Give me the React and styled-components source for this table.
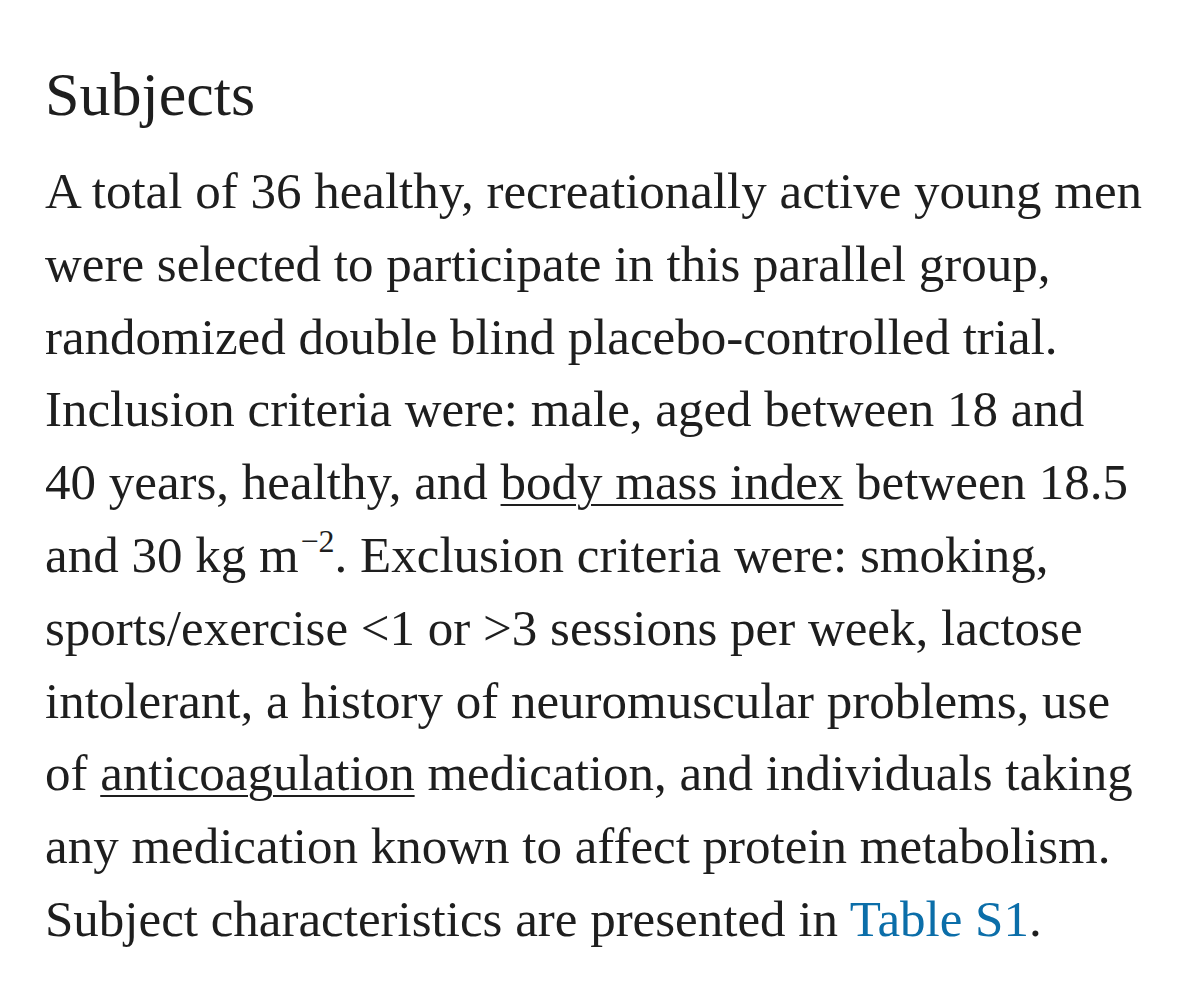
import React from "react";
import styled, { createGlobalStyle } from "styled-components";

const GlobalStyle = createGlobalStyle`
  html, body {
    margin: 0;
    padding: 0;
    background: #ffffff;
  }
`;

const Page = styled.div`
  width: 1200px;
  min-height: 993px;
  box-sizing: border-box;
  padding: 58px 40px 0px 45px;
  background: #ffffff;
  color: #1e1e1e;
  font-family: "Liberation Serif", "Times New Roman", serif;
`;

const Heading = styled.h2`
  margin: 0px;
  font-size: 62px;
  font-weight: normal;
  line-height: 72px;
`;

const Body = styled.p`
  margin: 25px 0px 0px 0px;
  font-size: 51px;
  line-height: 72.8px;
`;

const Line = styled.span`
  display: block;
  white-space: nowrap;
`;

const Term = styled.span`
  text-decoration: underline;
  text-decoration-thickness: 2px;
  text-underline-offset: 5px;
`;

const Sup = styled.sup`
  font-size: 32px;
  line-height: 0;
  vertical-align: 20px;
  margin-left: 2px;
`;

const Ref = styled.a`
  color: #0b6ea9;
  text-decoration: none;
`;

const lines = [
  "A total of 36 healthy, recreationally active young men",
  "were selected to participate in this parallel group,",
  "randomized double blind placebo-controlled trial.",
  "Inclusion criteria were: male, aged between 18 and",
];

export default function App() {
  return (
    <React.Fragment>
      <GlobalStyle />
      <Page>
        <Heading>Subjects</Heading>
        <Body>
          {lines.map((l) => (
            <Line key={l}>{l}</Line>
          ))}
          <Line>
            40 years, healthy, and <Term>body mass index</Term> between 18.5
          </Line>
          <Line>
            and 30 kg m<Sup>−2</Sup>. Exclusion criteria were: smoking,
          </Line>
          <Line>sports/exercise &lt;1 or &gt;3 sessions per week, lactose</Line>
          <Line>intolerant, a history of neuromuscular problems, use</Line>
          <Line>
            of <Term>anticoagulation</Term> medication, and individuals taking
          </Line>
          <Line>any medication known to affect protein metabolism.</Line>
          <Line>
            Subject characteristics are presented in <Ref href="#">Table S1</Ref>.
          </Line>
        </Body>
      </Page>
    </React.Fragment>
  );
}
